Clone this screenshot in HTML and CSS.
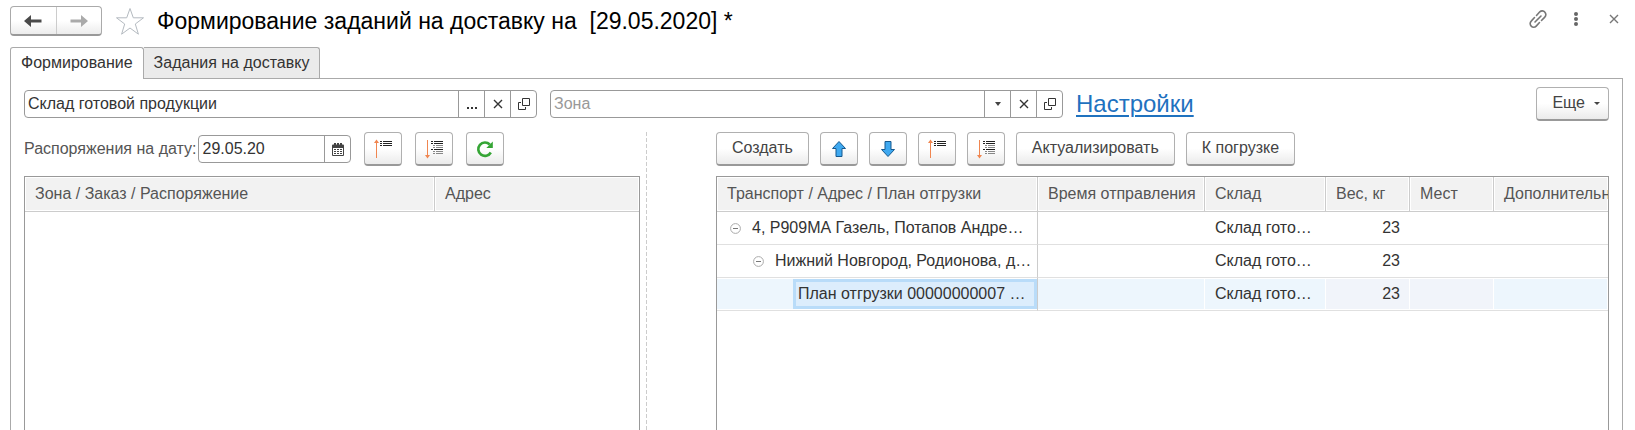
FILE: index.html
```html
<!DOCTYPE html>
<html lang="ru">
<head>
<meta charset="utf-8">
<title>Формирование заданий на доставку</title>
<link rel="stylesheet" href="styles.css">
</head>
<body>
<svg class="defs" aria-hidden="true">
  <symbol id="i-x" viewBox="0 0 12 12"><path d="M2 2l8 8M10 2l-8 8" fill="none" stroke="currentColor" stroke-width="1.4"/></symbol>
  <symbol id="i-open" viewBox="0 0 12 12"><path d="M4.500 .5h7v7h-7zM3 4.500H.5v7h7V9" fill="none" stroke="currentColor"/></symbol>
  <symbol id="i-up-list" viewBox="0 0 20 20">
    <path d="M3.500 2v17" stroke="#f08650" fill="none"/><path d="M3.500 .5L6 4H1z" fill="#f08650"/>
    <path d="M7 2.500h2M10 2.500h9M7 4.500h2M10 4.500h9M7 6.500h2M10 6.500h9" stroke="#222" fill="none"/>
  </symbol>
  <symbol id="i-down-list" viewBox="0 0 20 20">
    <path d="M3.500 1v16" stroke="#f08650" fill="none"/><path d="M3.500 19.500L6 16H1z" fill="#f08650"/>
    <path d="M7 2.500h2M10 2.500h9M7 4.500h2M10 4.500h9M7 10.500h2M10 10.500h9" stroke="#222" fill="none"/>
    <path d="M9 6.500h2M12 6.500h7M9 8.500h2M12 8.500h7M9 12.500h2M12 12.500h7M9 14.500h2M12 14.500h7" stroke="#888" fill="none"/>
  </symbol>
  <symbol id="i-minus" viewBox="0 0 11 11"><circle cx="5.500" cy="5.500" r="4.900" fill="#fff" stroke="#aaa"/><path d="M3 5.500h5" stroke="#777"/></symbol>
</svg>

<header class="titlebar">
  <div class="nav">
    <button type="button" aria-label="Назад"><svg width="18" height="14" viewBox="0 0 18 14"><path d="M0 7l7-6v4.500h10.500v3H7V13z" fill="#4a4a4a"/></svg></button>
    <button type="button" aria-label="Вперед"><svg width="18" height="14" viewBox="0 0 18 14"><path d="M18 7l-7-6v4.500H.5v3H11V13z" fill="#aaa"/></svg></button>
  </div>
  <button type="button" class="plain" aria-label="В избранное"><svg width="30" height="29" viewBox="0 0 30 29"><path d="M15 1.500l3.300 9.300h10.200l-8.200 6.200 3.100 10.200L15 21l-8.400 6.200L9.700 17 1.500 10.800h10.200z" fill="none" stroke="#b4bac0"/></svg></button>
  <h1>Формирование заданий на доставку на&nbsp; [29.05.2020] *</h1>
  <div class="window-tools">
    <button type="button" class="plain" aria-label="Ссылка"><svg width="20" height="20" viewBox="0 0 20 20" fill="none" stroke="#777" stroke-width="1.600" stroke-linecap="round"><path d="M7 13l6-6M8.500 6.500l3.300-3.700a3.400 3.400 0 0 1 5 .3 3.500 3.500 0 0 1 0 5l-3.300 3.400M11.500 13.500l-3.300 3.600a3.400 3.400 0 0 1-5 0 3.500 3.500 0 0 1 0-5l3.300-3.600"/></svg></button>
    <button type="button" class="plain" aria-label="Меню"><svg width="6" height="16" viewBox="0 0 6 16" fill="#666"><circle cx="3" cy="3" r="2"/><circle cx="3" cy="8" r="2"/><circle cx="3" cy="13" r="2"/></svg></button>
    <button type="button" class="plain" aria-label="Закрыть"><svg width="12" height="12" class="gray"><use href="#i-x"/></svg></button>
  </div>
</header>

<nav class="tabs" role="tablist">
  <button type="button" role="tab" aria-selected="true" class="tab active">Формирование</button>
  <button type="button" role="tab" aria-selected="false" class="tab">Задания на доставку</button>
</nav>

<main class="panel">
  <div class="filters">
    <div class="field wide">
      <input type="text" value="Склад готовой продукции" aria-label="Склад">
      <button type="button" aria-label="Выбрать"><svg width="12" height="12" viewBox="0 0 12 12" fill="#333"><path d="M1 9h2v2H1zM5 9h2v2H5zM9 9h2v2H9z"/></svg></button>
      <button type="button" aria-label="Очистить"><svg width="12" height="12"><use href="#i-x"/></svg></button>
      <button type="button" aria-label="Открыть"><svg width="12" height="12"><use href="#i-open"/></svg></button>
    </div>
    <div class="field wide">
      <input type="text" placeholder="Зона" aria-label="Зона">
      <button type="button" aria-label="Список"><svg width="6" height="4" viewBox="0 0 6 4"><path d="M0 0h6L3 4z" fill="#444"/></svg></button>
      <button type="button" aria-label="Очистить"><svg width="12" height="12"><use href="#i-x"/></svg></button>
      <button type="button" aria-label="Открыть"><svg width="12" height="12"><use href="#i-open"/></svg></button>
    </div>
    <a href="#settings" class="settings">Настройки</a>
    <button type="button" class="btn more">Еще<svg width="6" height="4" viewBox="0 0 6 4"><path d="M0 1h6L3 4z" fill="#444"/></svg></button>
  </div>

  <div class="panes">
    <section class="pane">
      <div class="toolbar orders">
        <label for="date">Распоряжения на дату:</label>
        <div class="field date">
          <input id="date" type="text" value="29.05.20">
          <button type="button" aria-label="Календарь"><svg width="12" height="13" viewBox="0 0 12 13"><path d="M1 1.500h1V0h2v1.500h1V0h2v1.500h1V0h2v1.500h1a1 1 0 0 1 1 1V12a1 1 0 0 1-1 1H1a1 1 0 0 1-1-1V2.500a1 1 0 0 1 1-1z" fill="#444"/><path d="M1 5h10v7H1z" fill="#fff"/><path d="M2 6h2v1H2zM5 6h2v1H5zM8 6h2v1H8zM2 8h2v1H2zM5 8h2v1H5zM8 8h2v1H8zM2 10h2v1H2zM5 10h2v1H5zM8 10h2v1H8z" fill="#444"/></svg></button>
        </div>
        <button type="button" class="btn icon" aria-label="Свернуть"><svg width="20" height="20"><use href="#i-up-list"/></svg></button>
        <button type="button" class="btn icon" aria-label="Развернуть"><svg width="20" height="20"><use href="#i-down-list"/></svg></button>
        <button type="button" class="btn icon" aria-label="Обновить"><svg width="18" height="18" viewBox="0 0 18 18"><path d="M14.800 12.500A6.700 6.700 0 1 1 13.800 4.500" fill="none" stroke="#35a535" stroke-width="2.600"/><path d="M16.800 1.500v6.500H10.300z" fill="#35a535"/></svg></button>
      </div>
      <div class="grid">
        <table>
          <colgroup><col class="c-zone"><col></colgroup>
          <thead><tr><th>Зона / Заказ / Распоряжение</th><th>Адрес</th></tr></thead>
        </table>
      </div>
    </section>

    <div class="splitter"></div>

    <section class="pane">
      <div class="toolbar">
        <button type="button" class="btn">Создать</button>
        <button type="button" class="btn icon" aria-label="Вверх"><svg width="16" height="18" viewBox="0 0 16 18"><path d="M8 1.500l6.500 7H11v8H5v-8H1.500z" fill="#3fa9f0" stroke="#15598f" stroke-linejoin="round"/></svg></button>
        <button type="button" class="btn icon" aria-label="Вниз"><svg width="16" height="18" viewBox="0 0 16 18"><path d="M8 16.500l6.500-7H11v-8H5v8H1.500z" fill="#3fa9f0" stroke="#15598f" stroke-linejoin="round"/></svg></button>
        <button type="button" class="btn icon" aria-label="Свернуть"><svg width="20" height="20"><use href="#i-up-list"/></svg></button>
        <button type="button" class="btn icon" aria-label="Развернуть"><svg width="20" height="20"><use href="#i-down-list"/></svg></button>
        <button type="button" class="btn">Актуализировать</button>
        <button type="button" class="btn">К погрузке</button>
      </div>
      <div class="grid">
        <table>
          <colgroup><col class="c-transport"><col class="c-time"><col class="c-store"><col class="c-num"><col class="c-num"><col></colgroup>
          <thead><tr><th>Транспорт / Адрес / План отгрузки</th><th>Время отправления</th><th>Склад</th><th>Вес, кг</th><th>Мест</th><th>Дополнительно</th></tr></thead>
          <tbody>
            <tr><td><div class="node"><svg width="11" height="11"><use href="#i-minus"/></svg>4, Р909МА Газель, Потапов Андре…</div></td><td></td><td>Склад гото…</td><td class="num">23</td><td></td><td></td></tr>
            <tr><td><div class="node level2"><svg width="11" height="11"><use href="#i-minus"/></svg>Нижний Новгород, Родионова, д…</div></td><td></td><td>Склад гото…</td><td class="num">23</td><td></td><td></td></tr>
            <tr class="selected"><td><div class="current">План отгрузки 00000000007 …</div></td><td></td><td>Склад гото…</td><td class="num">23</td><td class="num"></td><td></td></tr>
          </tbody>
        </table>
      </div>
    </section>
  </div>
</main>
</body>
</html>
```
FILE: styles.css
```css
* { box-sizing: border-box; }

body {
  margin: 0;
  min-height: 100vh;
  padding: 6px 12px 0 10px;
  display: flex;
  flex-direction: column;
  background: #fff;
  color: #333;
  font: 16px/20px "Liberation Sans", Arial, sans-serif;
}

button, input { font: inherit; color: inherit; }
button { margin: 0; padding: 0; border: 0; background: none; }
svg { display: block; flex: none; }
.defs { position: absolute; width: 0; height: 0; }

.titlebar { display: flex; align-items: center; height: 30px; }
.nav {
  display: flex;
  width: 92px;
  height: 30px;
  border: 1px solid #aaa;
  border-bottom: 2px solid #999;
  border-radius: 4px;
  background: linear-gradient(#fff 50%, #ececec);
}
.nav button { flex: 1; display: grid; place-items: center; }
.nav button + button { border-left: 1px solid #ccc; }
.plain { display: grid; place-items: center; }
.nav + .plain { margin-left: 13px; }
h1 { margin: 0 0 0 12px; font-size: 23px; line-height: 28px; font-weight: 400; color: #000; white-space: nowrap; }
.window-tools { display: flex; align-items: center; gap: 25px; margin-left: auto; padding: 0 3px 4px 0; }
.window-tools .plain:last-child { margin-left: 4px; }
.gray { color: #777; }

.tabs { display: flex; margin-top: 11px; }
.tab {
  height: 31px;
  padding: 0 10px 1px;
  border: 1px solid #aaa;
  border-bottom-width: 0;
  border-left-width: 0;
  border-radius: 0 3px 0 0;
  background: #ebebeb;
}
.tab.active {
  position: relative;
  margin-bottom: -1px;
  height: 32px;
  padding-bottom: 2px;
  border-left-width: 1px;
  border-radius: 3px 3px 0 0;
  background: #fff;
}
.panel {
  flex: 1;
  display: flex;
  flex-direction: column;
  padding: 8px 13px 0 13px;
  border: 1px solid #aaa;
  border-bottom: 0;
}

.filters { display: flex; align-items: center; gap: 13px; }
.field {
  display: flex;
  height: 28px;
  border: 1px solid #999;
  border-radius: 4px;
  background: #fff;
}
.wide { flex: 0 1 513px; min-width: 0; }
.field input {
  flex: 1;
  min-width: 0;
  width: 100%;
  padding: 0 3px;
  border: 0;
  background: none;
  outline: 0;
}
.field input::placeholder { color: #999; opacity: 1; }
.field button { flex: none; width: 26px; display: grid; place-items: center; border-left: 1px solid #999; }
.settings { color: #1f72bf; font-size: 24px; line-height: 28px; text-underline-offset: 3px; text-decoration-thickness: 2px; }

.btn {
  height: 34px;
  min-width: 72px;
  padding: 0 15px 2px;
  border: 1px solid #b0b0b0;
  border-bottom: 2px solid #999;
  border-radius: 4px;
  background: linear-gradient(#fff 50%, #ebebeb);
  color: #444;
  white-space: nowrap;
}
.btn.icon { flex: none; width: 38px; min-width: 0; padding: 0; display: grid; place-items: center; }
.btn.more { display: flex; align-items: center; gap: 9px; margin-left: auto; padding-right: 8px; }

.panes { flex: 1; display: grid; grid-template-columns: minmax(0, 616fr) 76px minmax(0, 893fr); margin-top: 11px; }
.pane { display: flex; flex-direction: column; min-width: 0; }
.splitter {
  margin-left: 6px;
  width: 1px;
  background: repeating-linear-gradient(#ccc 0 4px, transparent 4px 6px);
}
.toolbar { display: flex; align-items: center; gap: 11px; }
.toolbar.orders { gap: 13px; }
.toolbar label { margin-right: -11px; color: #555; white-space: nowrap; }
.date { width: 153px; }

.grid { flex: 1; margin-top: 10px; border: 1px solid #999; border-bottom: 0; overflow: hidden; }
table { width: 100%; table-layout: fixed; border-collapse: separate; border-spacing: 0; }
.c-zone { width: 410px; }
.c-transport { width: 321px; }
.c-time { width: 167px; }
.c-store { width: 121px; }
.c-num { width: 84px; }
th {
  height: 35px;
  padding: 0 0 1px 10px;
  border-right: 1px solid #ccc;
  border-bottom: 1px solid #ccc;
  background: #f2f2f2;
  box-shadow: inset 0 0 0 1px #fff;
  color: #555;
  font-weight: 400;
  text-align: left;
  white-space: nowrap;
  overflow: hidden;
}
th:last-child { border-right: 0; }
td {
  height: 33px;
  padding: 0 10px;
  border-bottom: 1px solid #e0e0e0;
  white-space: nowrap;
  overflow: hidden;
}
td:first-child { padding: 0; border-right: 1px solid #ccc; }
.num { text-align: right; }
.node { display: flex; align-items: center; gap: 11px; padding-left: 13px; }
.level2 { padding-left: 36px; }
.selected td { background: #edf6fd; box-shadow: inset 0 1px #fff, inset 0 -1px #fff, inset -1px 0 #fff; }
.selected .num { background: #f1f4fa; }
.current {
  height: 30px;
  margin-left: 76px;
  padding-left: 2px;
  border: 3px solid #b9dcf9;
  background: #dcedfc;
  line-height: 24px;
}
```
